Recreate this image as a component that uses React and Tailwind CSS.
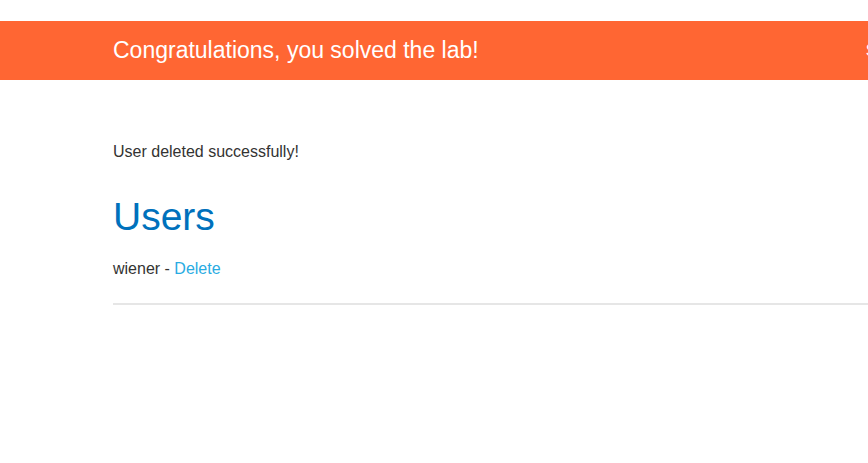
import React from "react";

export default function App() {
  return (
    <div className="min-h-[463px] w-full overflow-hidden bg-white font-['Liberation_Sans',Arial,sans-serif] text-[#333332]">
      <div className="h-[21px]" />
      {/* Banner de lab resuelto */}
      <div className="flex h-[59px] items-center overflow-hidden whitespace-nowrap bg-[#ff6633] text-white">
        <div className="flex w-full items-center pl-[113px]">
          <h4 className="text-[23px] leading-none">Congratulations, you solved the lab!</h4>
          <span className="ml-[387px] text-[16px]">Share your skills!</span>
        </div>
      </div>

      <div className="w-[900px] pl-[113px] pt-[62px]">
        <p className="text-[16px] leading-[20px]">User deleted successfully!</p>
        <h1 className="mt-[31px] text-[39px] leading-[48px] text-[#0071bc]">Users</h1>
        <div className="mt-[18px] text-[16px] leading-[20px]">
          <span>wiener - </span>
          <a href="#" className="text-[#29abe2]">
            Delete
          </a>
        </div>
        <hr className="mt-[24px] border-t-2 border-[#e6e6e6]" />
      </div>
    </div>
  );
}
